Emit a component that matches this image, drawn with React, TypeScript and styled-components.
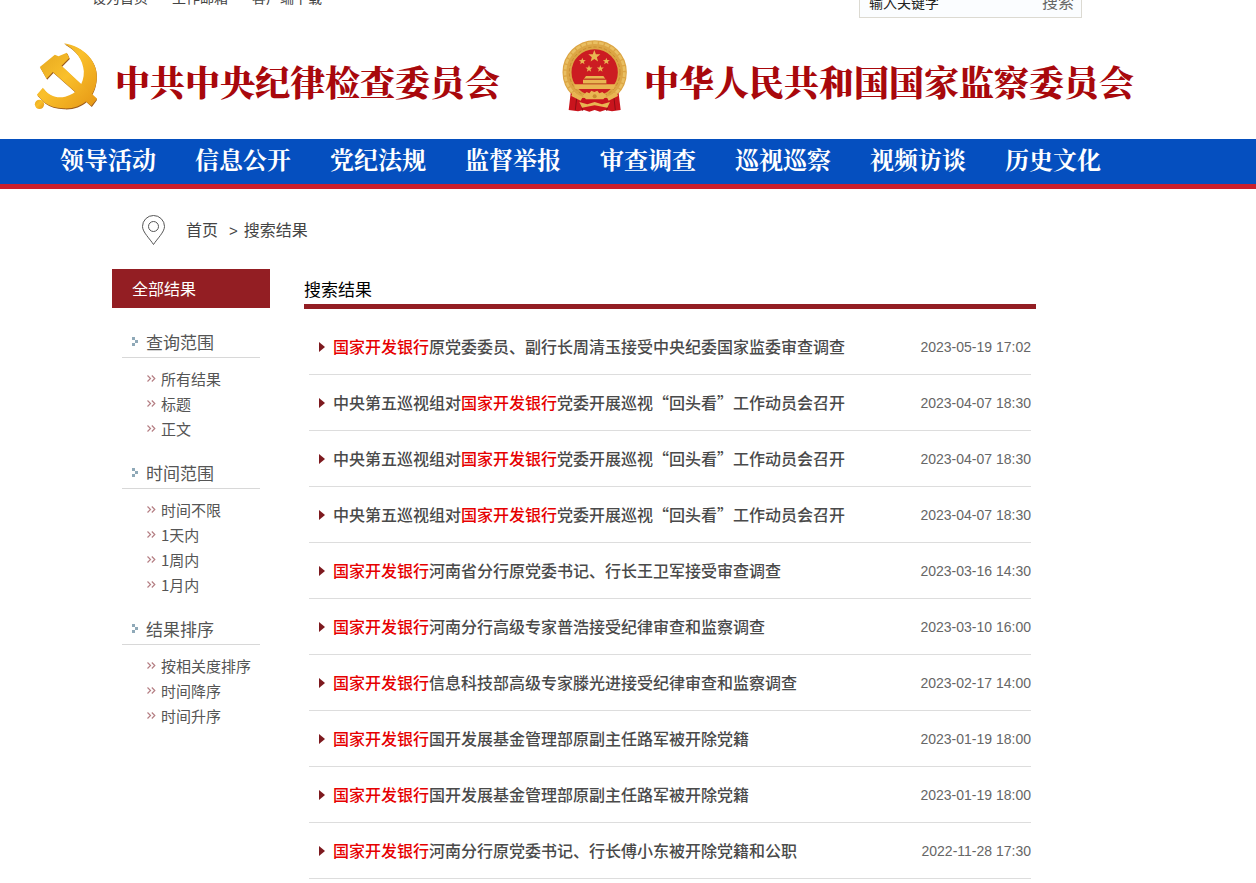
import React from "react";
import styled, { createGlobalStyle } from "styled-components";

const GlobalStyle = createGlobalStyle`
  * { box-sizing: border-box; }
  body {
    margin: 0;
    background: #fff;
    color: #444;
    font-family: "Liberation Sans", "Noto Sans CJK SC", sans-serif;
    font-size: 16px;
  }
  ul, h1, h2, p { margin: 0; padding: 0; font-weight: normal; }
  ul { list-style: none; }
  a { color: inherit; text-decoration: none; }
`;

const TopBar = styled.div`
  display: flex;
  justify-content: space-between;
  align-items: flex-end;
  height: 18px;
  overflow: hidden;
  padding: 0 174px 0 92px;
`;

const TopLinks = styled.nav`
  display: flex;
  gap: 24px;
  padding-bottom: 10px;
  font-size: 14px;
  line-height: 20px;
  color: #444;
`;

const SearchForm = styled.form`
  display: flex;
  align-items: center;
  width: 223px;
  height: 44px;
  flex-shrink: 0;
  padding: 0 7px 0 9px;
  border: 1px solid #dcdad2;
  background: #fbfdff;
`;

const SearchInput = styled.input`
  flex: 1;
  min-width: 0;
  height: 20px;
  margin-top: 14px;
  padding: 0;
  border: 0;
  background: none;
  font-family: inherit;
  font-size: 14px;
  line-height: 20px;
  color: #222;
  &::placeholder { color: #222; opacity: 1; }
`;

const SearchButton = styled.button`
  height: 24px;
  margin-top: 14px;
  padding: 0;
  border: 0;
  background: none;
  font-family: inherit;
  font-size: 16px;
  line-height: 24px;
  color: #666;
`;

const Header = styled.header`
  display: flex;
  align-items: center;
  height: 121px;
  padding: 0 0 5px 34px;
`;

const Brand = styled.h1`
  display: flex;
  align-items: center;
  gap: 16px;
  color: #a8080c;
  font-size: 35px;
  font-weight: 900;
  line-height: 48px;
  white-space: nowrap;
  font-family: "Noto Serif CJK SC", "Noto Sans CJK SC", serif;
  & + & { margin-left: 62px; }
  svg { flex-shrink: 0; }
  span { padding-top: 10px; }
`;

const MainNav = styled.nav`
  display: flex;
  gap: 39px;
  height: 50px;
  padding: 0 60px;
  background: #054fbf;
  border-bottom: 5px solid #cb1f2c;
  color: #fff;
  font-size: 24px;
  font-weight: 700;
  line-height: 40px;
  white-space: nowrap;
  font-family: "Noto Serif CJK SC", "Noto Sans CJK SC", serif;
`;

const Breadcrumb = styled.nav`
  display: flex;
  align-items: center;
  height: 80px;
  padding: 2px 142px 0;
  line-height: 24px;
  svg { margin-right: 20px; }
  a { padding-top: 2px; }
  span { margin: 0 6px 0 11px; padding-top: 2px; font-size: 15px; }
`;

const Main = styled.main`
  display: flex;
  align-items: flex-start;
  gap: 34px;
  padding: 0 220px 0 112px;
`;

const Sidebar = styled.aside`
  width: 158px;
  flex-shrink: 0;
`;

const AllResults = styled.a`
  display: block;
  height: 39px;
  margin-bottom: 2px;
  padding-left: 20px;
  background: #931e23;
  color: #fff;
  line-height: 41px;
`;

const FilterGroup = styled.section`
  padding: 0 10px;
`;

const FilterTitle = styled.h2`
  display: flex;
  align-items: center;
  gap: 7px;
  height: 48px;
  padding: 16px 0 0 10px;
  border-bottom: 1px solid #d8d8d8;
  font-size: 17px;
  color: #555;
`;

const FilterList = styled.ul`
  padding: 8px 0 0 25px;
  font-family: "Noto Sans CJK SC", sans-serif;
  font-size: 15px;
  line-height: 25px;
  color: #555;
  a {
    display: flex;
    align-items: center;
    gap: 5px;
    white-space: nowrap;
  }
`;

const Results = styled.section`
  flex: 1;
  min-width: 0;
`;

const ResultsTitle = styled.h2`
  height: 40px;
  border-bottom: 5px solid #931e23;
  font-size: 17px;
  line-height: 44px;
  color: #000;
`;

const ResultList = styled.ul`
  padding: 10px 5px;
`;

const ResultItem = styled.li`
  display: flex;
  align-items: center;
  height: 56px;
  padding-left: 10px;
  border-bottom: 1px solid #ddd;
  white-space: nowrap;
`;

const ResultLink = styled.a`
  margin: 0 auto 0 8px;
  padding-bottom: 2px;
  font-family: "Noto Sans CJK SC", sans-serif;
  font-weight: 500;
  line-height: 24px;
  color: #4a4a4a;
`;

const Keyword = styled.em`
  font-style: normal;
  color: #e60000;
`;

const PostedAt = styled.time`
  font-size: 14px;
  line-height: 20px;
  color: #666;
`;

const PartyEmblem = () => (
  <svg width="65" height="68" viewBox="29 20 192 204" aria-hidden="true">
    <defs>
      <linearGradient id="gold" x1="0" y1="0" x2="1" y2="1">
        <stop offset="0" stopColor="#e6a820" />
        <stop offset=".45" stopColor="#fac02b" />
        <stop offset="1" stopColor="#e59614" />
      </linearGradient>
    </defs>
    <g fill="#9a5a1c" transform="translate(2 3)">
      <path d="M117 24C180 34 218 80 214 128C210 190 168 222 116 219C92 218 74 212 60 202L36 178L54 157C72 182 96 190 121 186C160 179 182 146 179 108C176 72 153 44 117 24Z" />
      <path d="M45 95L90 59L101 64L126 52L133 68L110 91L215 190L199 212L84 110L65 130Z" />
    </g>
    <g fill="url(#gold)">
      <path d="M117 24C180 34 218 80 216 128C212 190 168 222 116 219C92 218 74 212 60 202L36 178L54 157C72 182 96 190 121 184C156 177 178 146 177 108C174 72 153 44 117 24Z" />
      <circle cx="44" cy="207" r="14" />
      <path d="M45 95L90 58L101 63L126 52L133 68L110 91L217 190L199 212L84 110L65 130Z" />
    </g>
  </svg>
);

const star = (cx: number, cy: number, r: number) =>
  Array.from({ length: 10 }, (_, i) => {
    const a = (Math.PI / 5) * i - Math.PI / 2;
    const d = i % 2 ? r * 0.42 : r;
    return `${(cx + d * Math.cos(a)).toFixed(1)},${(cy + d * Math.sin(a)).toFixed(1)}`;
  }).join(" ");

const StateEmblem = () => (
  <svg width="66" height="72" viewBox="36 16 198 216" aria-hidden="true">
    <circle cx="134" cy="113" r="83" fill="#cc1c22" stroke="#dca544" strokeWidth="27" />
    <circle cx="134" cy="113" r="89" fill="none" stroke="#e9bf62" strokeWidth="8" strokeDasharray="14 4" />
    <circle cx="134" cy="113" r="76" fill="none" stroke="#c98c30" strokeWidth="3" strokeDasharray="10 6" />
    <path d="M62 176L92 190H176L206 176L212 226L186 230L166 226L150 231L134 226L118 231L102 226L84 230L56 226Z" fill="#c9141d" />
    <path d="M80 190L76 226M192 190L196 226M94 212L98 228M174 212L170 228" stroke="#8e0d14" strokeWidth="3" />
    <g fill="#e9b552">
      <polygon points={star(133, 65, 19)} />
      <polygon points={star(97, 80, 11)} />
      <polygon points={star(169, 80, 11)} />
      <polygon points={star(117, 102, 11)} />
      <polygon points={star(151, 102, 11)} />
      <path d="M108 124H160L166 132H102ZM99 135H169V147H99ZM72 149H196L192 163H76Z" />
      <path d="M98 183L110 172L118 176L124 168L133 172L142 168L148 176L157 172L170 183L160 194H108Z" />
      <path d="M68 172L98 187L92 198L64 184ZM200 172L170 187L176 198L204 184Z" />
      <path d="M88 202L112 209L134 202L156 209L180 202L172 219L134 212L96 219Z" />
    </g>
    <path d="M99 147H169M104 133H164" stroke="#a8551a" strokeWidth="2" />
    <circle cx="134" cy="185" r="6" fill="#c98c30" />
  </svg>
);

const PinIcon = () => (
  <svg width="24" height="30" viewBox="0 0 24 30" fill="none" stroke="#555" strokeWidth="1" aria-hidden="true">
    <path d="M11.500 29.500C8 24 .5 17 .5 11.500A11 11 0 0 1 22.500 11.500C22.500 17 15 24 11.500 29.500Z" />
    <circle cx="11.500" cy="11.500" r="5" />
  </svg>
);

const DotsIcon = () => (
  <svg width="7" height="9" viewBox="0 0 7 9" fill="#8fa9b8" aria-hidden="true">
    <path d="M0 0H3V3H0ZM3 3H6V6H3ZM0 6H3V9H0Z" />
  </svg>
);

const ChevronsIcon = () => (
  <svg width="9" height="7" viewBox="0 0 9 7" fill="none" stroke="#b57f84" strokeWidth="1.2" aria-hidden="true">
    <path d="M.5 .5L3.500 3.500L.5 6.500M4.800 .5L7.800 3.500L4.800 6.500" />
  </svg>
);

const ArrowIcon = () => (
  <svg width="6" height="10" viewBox="0 0 6 10" fill="#7d1a1f" aria-hidden="true">
    <path d="M0 0L6 5L0 10Z" />
  </svg>
);

const navItems = ["领导活动", "信息公开", "党纪法规", "监督举报", "审查调查", "巡视巡察", "视频访谈", "历史文化"];

const filters = [
  { title: "查询范围", items: ["所有结果", "标题", "正文"] },
  { title: "时间范围", items: ["时间不限", "1天内", "1周内", "1月内"] },
  { title: "结果排序", items: ["按相关度排序", "时间降序", "时间升序"] },
];

const KEYWORD = "国家开发银行";
const inspection = "中央第五巡视组对国家开发银行党委开展巡视“回头看”工作动员会召开";

const results = [
  ["国家开发银行原党委委员、副行长周清玉接受中央纪委国家监委审查调查", "2023-05-19 17:02"],
  [inspection, "2023-04-07 18:30"],
  [inspection, "2023-04-07 18:30"],
  [inspection, "2023-04-07 18:30"],
  ["国家开发银行河南省分行原党委书记、行长王卫军接受审查调查", "2023-03-16 14:30"],
  ["国家开发银行河南分行高级专家普浩接受纪律审查和监察调查", "2023-03-10 16:00"],
  ["国家开发银行信息科技部高级专家滕光进接受纪律审查和监察调查", "2023-02-17 14:00"],
  ["国家开发银行国开发展基金管理部原副主任路军被开除党籍", "2023-01-19 18:00"],
  ["国家开发银行国开发展基金管理部原副主任路军被开除党籍", "2023-01-19 18:00"],
  ["国家开发银行河南分行原党委书记、行长傅小东被开除党籍和公职", "2022-11-28 17:30"],
];

export default function App() {
  return (
    <div lang="zh-CN">
      <GlobalStyle />
      <TopBar>
        <TopLinks>
          <a href="#home">设为首页</a>
          <a href="#mail">工作邮箱</a>
          <a href="#client">客户端下载</a>
        </TopLinks>
        <SearchForm onSubmit={(e) => e.preventDefault()}>
          <SearchInput type="text" aria-label="输入关键字" placeholder="输入关键字" />
          <SearchButton type="submit">搜索</SearchButton>
        </SearchForm>
      </TopBar>
      <Header>
        <Brand>
          <PartyEmblem />
          <span>中共中央纪律检查委员会</span>
        </Brand>
        <Brand>
          <StateEmblem />
          <span>中华人民共和国国家监察委员会</span>
        </Brand>
      </Header>
      <MainNav>
        {navItems.map((item) => (
          <a key={item} href="#nav">{item}</a>
        ))}
      </MainNav>
      <Breadcrumb>
        <PinIcon />
        <a href="#home">首页</a>
        <span>&gt;</span>
        <a href="#search">搜索结果</a>
      </Breadcrumb>
      <Main>
        <Sidebar>
          <AllResults href="#all">全部结果</AllResults>
          {filters.map((group) => (
            <FilterGroup key={group.title}>
              <FilterTitle>
                <DotsIcon />
                {group.title}
              </FilterTitle>
              <FilterList>
                {group.items.map((item) => (
                  <li key={item}>
                    <a href="#filter">
                      <ChevronsIcon />
                      {item}
                    </a>
                  </li>
                ))}
              </FilterList>
            </FilterGroup>
          ))}
        </Sidebar>
        <Results>
          <ResultsTitle>搜索结果</ResultsTitle>
          <ResultList>
            {results.map(([title, date], i) => {
              const [before, after] = title.split(KEYWORD);
              return (
                <ResultItem key={i}>
                  <ArrowIcon />
                  <ResultLink href="#article">
                    {before}
                    <Keyword>{KEYWORD}</Keyword>
                    {after}
                  </ResultLink>
                  <PostedAt>{date}</PostedAt>
                </ResultItem>
              );
            })}
          </ResultList>
        </Results>
      </Main>
    </div>
  );
}
